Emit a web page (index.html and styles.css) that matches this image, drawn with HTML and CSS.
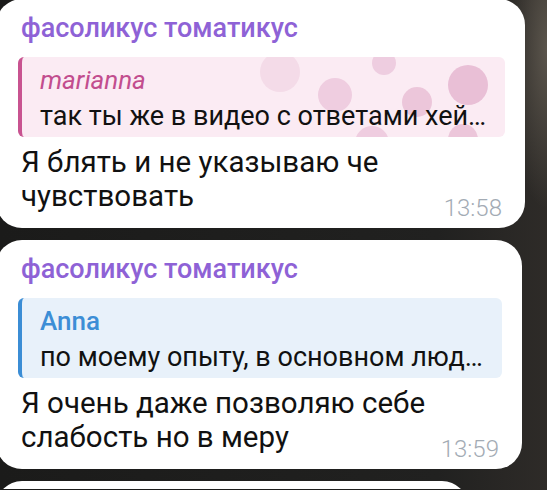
FILE: index.html
```html
<!DOCTYPE html>
<html lang="ru">
<head>
    <meta charset="UTF-8">
    <meta name="viewport" content="width=device-width, initial-scale=1.0">
    <title>Чат</title>
    <link rel="stylesheet" href="styles.css">
</head>
<body>
    <div class="chat">
        <!-- первое сообщение -->
        <div class="bubble bubble-first">
            <div class="sender">фасоликус томатикус</div>
            <div class="reply reply-pink">
                <svg class="reply-pattern" width="260" height="80" viewBox="0 0 260 80">
                    <circle cx="35" cy="15" r="20" fill="#f4dbe8"/>
                    <circle cx="139" cy="6" r="12" fill="#eecde0"/>
                    <circle cx="90" cy="38" r="17" fill="#efcde0"/>
                    <circle cx="172" cy="45" r="15" fill="#ecc6da"/>
                    <circle cx="223" cy="28" r="20" fill="#e9bfd6"/>
                    <circle cx="127" cy="86" r="17" fill="#efcde0"/>
                    <circle cx="218" cy="82" r="15" fill="#ecc6da"/>
                </svg>
                <div class="reply-name">marianna</div>
                <div class="reply-text">так ты же в видео с ответами хей…</div>
            </div>
            <div class="message">
                <div class="message-text">Я блять и не указываю че<br>чувствовать</div>
                <span class="time">13:58</span>
            </div>
        </div>

        <!-- второе сообщение -->
        <div class="bubble bubble-second">
            <div class="sender">фасоликус томатикус</div>
            <div class="reply reply-blue">
                <div class="reply-name">Anna</div>
                <div class="reply-text">по моему опыту, в основном люд…</div>
            </div>
            <div class="message">
                <div class="message-text">Я очень даже позволяю себе<br>слабость но в меру</div>
                <span class="time">13:59</span>
            </div>
        </div>

        <!-- следующее, видно только край -->
        <div class="bubble bubble-next"></div>
    </div>
</body>
</html>
```

FILE: styles.css
```css
html, body {
    margin: 0;
    height: 100%;
    overflow: hidden;
}

body {
    font-family: Roboto, "Noto Sans", sans-serif;
    background:
        radial-gradient(ellipse 40px 160px at 100% 10%, #5b554c 0%, rgba(70, 65, 58, 0) 100%),
        linear-gradient(90deg, #1b1b1a 0%, #212120 80%, #2e2b28 100%);
}

.chat {
    display: flex;
    flex-direction: column;
    gap: 12px;
    height: 490px;
    overflow: hidden;
    margin-top: -1px;
}

/* пузырь сообщения */
.bubble {
    flex-shrink: 0;
    background-color: #fff;
    border-radius: 26px;
    margin-left: -4px;
    padding: 14px 20px 15px 22px;
    box-sizing: border-box;
}

.bubble-first {
    width: 529px;
}

.bubble-second {
    width: 526px;
}

.bubble-next {
    width: 472px;
    height: 60px;
}

.sender {
    color: #8e62d6;
    font-size: 27px;
    font-weight: 500;
    line-height: 30px;
    padding-left: 3px;
}

/* цитата */
.reply {
    position: relative;
    overflow: hidden;
    margin-top: 14px;
    padding: 6px 10px 4px 18px;
    border-left: 4px solid;
    border-radius: 6px;
    white-space: nowrap;
}

.reply-pink {
    background-color: #fbebf3;
    border-left-color: #c85390;
}

.reply-blue {
    background-color: #e8f1fa;
    border-left-color: #3b8dd5;
}

.reply-pattern {
    position: absolute;
    top: 0;
    right: 0;
}

.reply-name {
    position: relative;
    font-size: 26px;
    line-height: 34px;
}

.reply-pink .reply-name {
    color: #c24d8e;
    font-style: italic;
}

.reply-blue .reply-name {
    color: #3c8ed6;
    font-weight: 500;
}

.reply-text {
    position: relative;
    margin-top: 2px;
    color: #111;
    font-size: 27px;
    line-height: 34px;
}

/* текст и время */
.message {
    display: flex;
    align-items: flex-end;
    justify-content: space-between;
    margin-top: 8px;
    padding-left: 3px;
}

.message-text {
    color: #111;
    font-size: 29.5px;
    line-height: 34px;
}

.time {
    color: #a3abb4;
    font-size: 24px;
    font-weight: 300;
    line-height: 28px;
    margin-right: 3px;
    margin-bottom: -9px;
}
```
